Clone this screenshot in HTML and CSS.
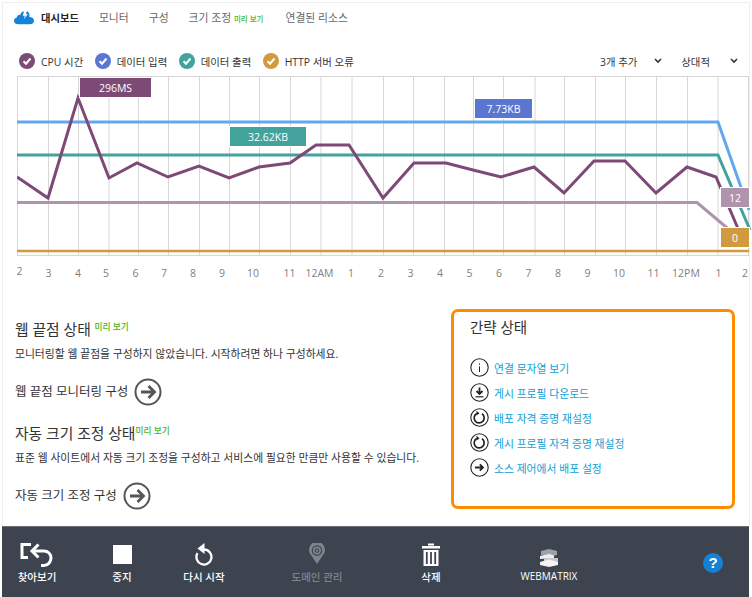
FILE: index.html
```html
<!DOCTYPE html>
<html lang="ko">
<head>
<meta charset="utf-8">
<title>대시보드</title>
<link rel="stylesheet" href="styles.css">
</head>
<body>
<div class="shell">
  <nav class="nav">
    <svg class="logo" width="20" height="15" viewBox="0 0 22 15"><path fill="#1383d8" d="M4.500 15C1.800 15 0 13.400 0 11.200 0 9.300 1.200 8 3 7.600 3.300 5.500 5 4.200 7 4.500 7.500 2.200 9 1 11 .6L9.700 5.500 12 5.500 10.800 9.500 15.200 3.700 13 3.700 14.300.3C16.200 1.400 17.200 3.300 17 5.500 17 6 17 6.500 16.900 7 19.600 6.900 22 8.600 22 11.200 22 13.500 20 15 17.600 15Z"/></svg>
    <a class="tab active">대시보드</a>
    <a class="tab">모니터</a>
    <a class="tab">구성</a>
    <a class="tab tab-scale">크기 조정 <span class="preview">미리 보기</span></a>
    <a class="tab">연결된 리소스</a>
  </nav>

  <div class="legend">
    <span class="key"><svg class="check" width="16" height="16" viewBox="0 0 16 16"><circle cx="8" cy="8" r="8" fill="#7d4a76"/><path d="M4.500 8.200 7 10.700 11.500 5.500" fill="none" stroke="#fff" stroke-width="2"/></svg>CPU 시간</span>
    <span class="key"><svg class="check" width="16" height="16" viewBox="0 0 16 16"><circle cx="8" cy="8" r="8" fill="#5b76d1"/><path d="M4.500 8.200 7 10.700 11.500 5.500" fill="none" stroke="#fff" stroke-width="2"/></svg>데이터 입력</span>
    <span class="key"><svg class="check" width="16" height="16" viewBox="0 0 16 16"><circle cx="8" cy="8" r="8" fill="#43a39c"/><path d="M4.500 8.200 7 10.700 11.500 5.500" fill="none" stroke="#fff" stroke-width="2"/></svg>데이터 출력</span>
    <span class="key"><svg class="check" width="16" height="16" viewBox="0 0 16 16"><circle cx="8" cy="8" r="8" fill="#d29a3e"/><path d="M4.500 8.200 7 10.700 11.500 5.500" fill="none" stroke="#fff" stroke-width="2"/></svg>HTTP 서버 오류</span>
    <span class="select select-add">3개 추가<svg width="8" height="6" viewBox="0 0 8 6"><path d="M1 1 4 4 7 1" fill="none" stroke="#333" stroke-width="1.600"/></svg></span>
    <span class="select select-mode">상대적<svg width="8" height="6" viewBox="0 0 8 6"><path d="M1 1 4 4 7 1" fill="none" stroke="#333" stroke-width="1.600"/></svg></span>
  </div>

  <svg class="chart" width="735" height="212" viewBox="17 76 735 212">
    <path class="grid" d="M17.500 76V256M48.500 76V256M78.500 76V256M109 76V256M138.500 76V256M168.500 76V256M199.500 76V256M229.500 76V256M259.500 76V256M290.500 76V256M321 76V256M352 76V256M383.500 76V256M413.500 76V256M444.500 76V256M473.500 76V256M503.500 76V256M535 76V256M564.500 76V256M595.500 76V256M625.500 76V256M656.500 76V256M687.500 76V256M718 76V256M748.500 76V256M17 76.500H749M17 255.500H749"/>
    <path class="ln" stroke="#62a8ee" d="M17 122H718L749 210"/>
    <path class="ln" stroke="#43a39c" d="M17 155H718L750 230"/>
    <path class="ln" stroke="#b093ad" d="M17 202.500H697L732 232"/>
    <path class="ln thin" stroke="#d29a3e" d="M17 251H749"/>
    <path class="ln" stroke="#7d4a76" d="M17 177 48 198 78 98 109 178 137 163 168 177 199 166 229 178 259 167 290 163 316 145 349 145 383 198 414 163 446 163 473 170 501 177 534 167 564 193 594 161 625 161 656 193 687 167 716 177 745 245"/>
    <g class="tag">
      <rect x="79" y="77" width="73" height="21" fill="#fff"/><rect x="80" y="78" width="71" height="19" fill="#7d4a76"/><text x="115.500" y="91.500">296MS</text>
      <rect x="474" y="98" width="59" height="21" fill="#fff"/><rect x="475" y="99" width="57" height="19" fill="#5b76d1"/><text x="503.500" y="112.500">7.73KB</text>
      <rect x="229" y="126" width="78" height="21" fill="#fff"/><rect x="230" y="127" width="76" height="19" fill="#43a39c"/><text x="268" y="140.500">32.62KB</text>
      <rect x="720" y="187" width="30" height="21" fill="#fff"/><rect x="721" y="188" width="28" height="19" fill="#b093ad"/><text x="735" y="201.500">12</text>
      <rect x="720" y="227" width="30" height="21" fill="#fff"/><rect x="721" y="228" width="28" height="19" fill="#d29a3e"/><text x="735" y="241.500">0</text>
    </g>
    <g class="ticks">
      <text x="19.500" y="275">2</text><text x="48.500" y="277">3</text><text x="78" y="277">4</text><text x="106" y="277">5</text><text x="135.500" y="277">6</text><text x="164" y="277">7</text><text x="193" y="277">8</text><text x="222" y="277">9</text><text x="253" y="277">10</text><text x="289.500" y="277">11</text><text x="319.500" y="277">12AM</text><text x="351" y="277">1</text><text x="381" y="277">2</text><text x="410.500" y="277">3</text><text x="440" y="277">4</text><text x="469.500" y="277">5</text><text x="499" y="277">6</text><text x="528.500" y="277">7</text><text x="558" y="277">8</text><text x="587.500" y="277">9</text><text x="619" y="277">10</text><text x="653.500" y="277">11</text><text x="686" y="277">12PM</text><text x="718.500" y="277">1</text><text x="745" y="277">2</text>
    </g>
  </svg>

  <main class="status">
    <section class="endpoints">
      <h2 class="heading">웹 끝점 상태 <span class="preview preview-up">미리 보기</span></h2>
      <p class="desc">모니터링할 웹 끝점을 구성하지 않았습니다. 시작하려면 하나 구성하세요.</p>
      <a class="action">웹 끝점 모니터링 구성<svg width="28" height="28" viewBox="0 0 28 28"><circle cx="14" cy="14" r="12.500" fill="none" stroke="#555" stroke-width="2"/><path d="M7 14H20M14.500 8 20.500 14 14.500 20" fill="none" stroke="#555" stroke-width="2.800"/></svg></a>
      <h2 class="heading heading-second">자동 크기 조정 상태<span class="preview preview-up">미리 보기</span></h2>
      <p class="desc">표준 웹 사이트에서 자동 크기 조정을 구성하고 서비스에 필요한 만큼만 사용할 수 있습니다.</p>
      <a class="action">자동 크기 조정 구성<svg width="28" height="28" viewBox="0 0 28 28"><circle cx="14" cy="14" r="12.500" fill="none" stroke="#555" stroke-width="2"/><path d="M7 14H20M14.500 8 20.500 14 14.500 20" fill="none" stroke="#555" stroke-width="2.800"/></svg></a>
    </section>
    <aside class="quick">
      <h3 class="quick-title">간략 상태</h3>
      <ul class="links">
        <li><svg width="19" height="19" viewBox="0 0 19 19"><circle cx="9.500" cy="9.500" r="8.700" fill="none" stroke="#222" stroke-width="1.100"/><path d="M9.500 5.500V6.800M9.500 8.300V14" stroke="#222" stroke-width="1"/></svg><a>연결 문자열 보기</a></li>
        <li><svg width="19" height="19" viewBox="0 0 19 19"><circle cx="9.500" cy="9.500" r="8.700" fill="none" stroke="#222" stroke-width="1.100"/><path d="M9.500 4.500V10M6.500 8 9.500 11 12.500 8" fill="none" stroke="#222" stroke-width="1.800"/><path d="M5.500 13.800H13.500" stroke="#222" stroke-width="1.200"/></svg><a>게시 프로필 다운로드</a></li>
        <li><svg width="19" height="19" viewBox="0 0 19 19"><circle cx="9.500" cy="9.500" r="8.700" fill="none" stroke="#222" stroke-width="1.100"/><path d="M12 5.800A5 5 0 1 1 6.800 5.500" fill="none" stroke="#222" stroke-width="1.700"/><path d="M6.500 2.800 9.500 5.200 6.500 7.600Z" fill="#222"/></svg><a>배포 자격 증명 재설정</a></li>
        <li><svg width="19" height="19" viewBox="0 0 19 19"><circle cx="9.500" cy="9.500" r="8.700" fill="none" stroke="#222" stroke-width="1.100"/><path d="M12 5.800A5 5 0 1 1 6.800 5.500" fill="none" stroke="#222" stroke-width="1.700"/><path d="M6.500 2.800 9.500 5.200 6.500 7.600Z" fill="#222"/></svg><a>게시 프로필 자격 증명 재설정</a></li>
        <li><svg width="19" height="19" viewBox="0 0 19 19"><circle cx="9.500" cy="9.500" r="8.700" fill="none" stroke="#222" stroke-width="1.100"/><path d="M5 9.500H12.500M9.800 6.300 13 9.500 9.800 12.700" fill="none" stroke="#222" stroke-width="1.800"/></svg><a>소스 제어에서 배포 설정</a></li>
      </ul>
    </aside>
  </main>
</div>

<footer class="bar">
  <div class="cmd cmd-browse"><svg width="34" height="24" viewBox="0 0 34 24"><path d="M11 1.500H2V14.500H8" fill="none" stroke="#fff" stroke-width="3"/><path d="M14 8H24C28 8 31 11 31 15 31 19 28 22.500 24 22.500H21" fill="none" stroke="#fff" stroke-width="3"/><path d="M18.500 1.500 12 8 18.500 14.500" fill="none" stroke="#fff" stroke-width="3"/></svg><span>찾아보기</span></div>
  <div class="cmd cmd-stop"><svg width="19" height="24" viewBox="0 0 19 24"><rect y="2" width="19" height="19" fill="#fff"/></svg><span>중지</span></div>
  <div class="cmd cmd-restart"><svg width="18" height="24" viewBox="0 0 18 24"><path d="M9 6.500A7.500 7.500 0 1 1 2.500 10.200" fill="none" stroke="#fff" stroke-width="2.300"/><path d="M9.500 0V11L2.500 5.500Z" fill="#fff"/></svg><span>다시 시작</span></div>
  <div class="cmd cmd-domain"><svg width="16" height="24" viewBox="0 0 16 24"><path d="M8 21 2 12A8 8 0 1 1 14 12Z" fill="#7e848c"/><circle cx="8" cy="7.500" r="4.700" fill="none" stroke="#3d4450" stroke-width="1.200"/><circle cx="8" cy="7.500" r="1.800" fill="none" stroke="#3d4450" stroke-width="1.100"/></svg><span>도메인 관리</span></div>
  <div class="cmd cmd-delete"><svg width="18" height="24" viewBox="0 0 18 24"><path d="M0 3H18V5.500H0ZM6 .5H12V2.500H6Z" fill="#fff"/><path d="M1.500 7H16.500V23H1.500Z" fill="#fff"/><path d="M4.800 9V21M9 9V21M13.200 9V21" stroke="#3d4450" stroke-width="1.800"/></svg><span>삭제</span></div>
  <div class="cmd cmd-matrix"><svg width="18" height="24" viewBox="0 0 18 24"><g transform="translate(0 6)"><path d="M1 2 9 0 17 2V6L9 8 1 6Z" fill="#9ea2a8"/><path d="M0 7 9 5 14 6.500 14 9 0 10Z" fill="#eee"/><path d="M4 9 18 9V13L4 12Z" fill="#c6c8cb"/><path d="M0 13 9 10.500 18 13V16L9 18 0 16Z" fill="#f4f4f4"/></g></svg><span class="latin">WEBMATRIX</span></div>
  <div class="help">?</div>
</footer>
</body>
</html>
```
FILE: styles.css
```css
* { box-sizing: border-box; }
html, body { margin: 0; padding: 0; }
body {
  width: 752px;
  height: 597px;
  overflow: hidden;
  background: #fff;
  color: #333;
  font-family: "Open Sans", "Noto Sans CJK KR", sans-serif;
  font-size: 10.800px;
}
.shell {
  margin: 2px 2px 0 2px;
  width: 748px;
  height: 524px;
  border-top: 1px solid #eee;
  border-left: 1px solid #eee;
  border-right: 1px solid #eee;
}
.nav {
  display: flex;
  align-items: center;
  height: 28px;
  padding-left: 11px;
}
.logo { margin-right: 7px; }
.tab { font-size: 10.800px; color: #666; margin-right: 20px; white-space: nowrap; }
.tab.active { color: #222; font-size: 10.300px; font-weight: 700; }
.tab-scale { margin-right: 22px; }
.preview { color: #4bb51e; font-size: 7.500px; font-weight: 500; }
.legend {
  display: flex;
  align-items: center;
  height: 24px;
  margin-top: 18px;
  padding-left: 16px;
  font-size: 10.400px;
  color: #333;
}
.key { display: flex; align-items: center; gap: 6px; margin-right: 11.500px; white-space: nowrap; }
.select { display: flex; align-items: center; white-space: nowrap; }
.select-add { margin-left: auto; gap: 17px; margin-right: 19px; }
.select-mode { gap: 20px; margin-right: 11px; }
.chart { display: block; margin: 3px 0 0 14px; }
.grid { fill: none; stroke: #d6d6d6; stroke-width: 1; }
.ln { fill: none; stroke-width: 3; }
.thin { stroke-width: 2.500; }
.tag text { fill: #fff; font-size: 10.500px; text-anchor: middle; }
.ticks text { fill: #808080; font-size: 10.500px; text-anchor: middle; }
.status {
  display: flex;
  justify-content: space-between;
  padding-left: 12px;
  padding-right: 14px;
}
.endpoints { width: 420px; padding-top: 28px; }
.heading { margin: 0; font-size: 14.800px; line-height: 22px; font-weight: 400; color: #333; white-space: nowrap; }
.heading-second { margin-top: 16px; }
.preview-up { font-size: 8.700px; vertical-align: 5px; }
.desc { margin: 5px 0 0; font-size: 10.800px; line-height: 18px; color: #333; white-space: nowrap; }
.action { display: flex; align-items: center; gap: 6px; margin-top: 13px; font-size: 12.500px; color: #333; white-space: nowrap; height: 28px; }
.action svg { margin-top: 3px; }
.quick {
  width: 284px;
  height: 200px;
  margin-top: 21px;
  padding: 5px 16px;
  border: 3px solid #ff8c00;
  border-radius: 7px;
}
.quick-title { margin: 0; font-size: 14.500px; line-height: 22px; font-weight: 400; color: #333; }
.links { list-style: none; margin: 16px 0 0; padding: 0; }
.links li { display: flex; align-items: center; gap: 5px; height: 25px; font-size: 10.800px; color: #0e9fd6; white-space: nowrap; }
.bar {
  position: relative;
  display: flex;
  align-items: flex-start;
  margin-left: 2px;
  width: 747px;
  height: 71px;
  background: #3d4450;
  border-top: 1px solid #6b7079;
  color: #fff;
}
.cmd { display: flex; flex-direction: column; align-items: center; height: 70px; padding-top: 16px; font-size: 10.500px; white-space: nowrap; }
.cmd svg { margin-bottom: 2px; }
.cmd span { font-weight: 500; }
.cmd-browse { width: 70px; }
.cmd-stop { width: 100px; }
.cmd-restart { width: 64px; }
.cmd-domain { width: 162px; color: #7e848c; }
.cmd-delete { width: 66px; }
.cmd-matrix { width: 170px; }
.latin { font-size: 10px; font-weight: 400 !important; }
.help {
  width: 20px;
  height: 20px;
  margin: 26px 0 0 69px;
  border-radius: 50%;
  background: #1581d3;
  color: #fff;
  font-family: "Liberation Sans", sans-serif;
  font-size: 15px;
  font-weight: 700;
  line-height: 20px;
  text-align: center;
}
```
